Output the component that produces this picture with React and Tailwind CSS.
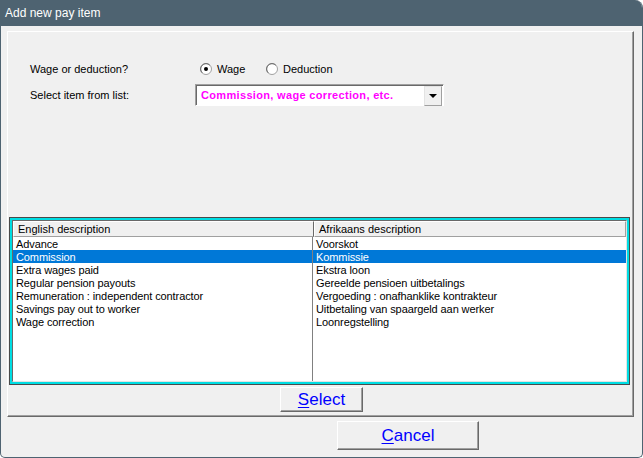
import React from 'react';

const rows = [
  ['Advance', 'Voorskot'],
  ['Commission', 'Kommissie'],
  ['Extra wages paid', 'Ekstra loon'],
  ['Regular pension payouts', 'Gereelde pensioen uitbetalings'],
  ['Remuneration : independent contractor', 'Vergoeding : onafhanklike kontrakteur'],
  ['Savings pay out to worker', 'Uitbetaling van spaargeld aan werker'],
  ['Wage correction', 'Loonregstelling'],
];

const SELECTED = 1;

// classic win32 radio button
const Radio = ({ checked }) => (
  <svg width="12" height="12" viewBox="0 0 12 12" className="shrink-0">
    <circle cx="6" cy="6" r="5.5" fill="#ffffff" stroke="#a0a0a0" />
    <path d="M2.2 9.8 A5.3 5.3 0 0 1 9.8 2.2" fill="none" stroke="#696969" strokeWidth="1" />
    {checked && <circle cx="6" cy="6" r="2" fill="#000000" />}
  </svg>
);

const Column = ({ index }) => (
  <div className="flex flex-col">
    {rows.map((r, i) => (
      <div
        key={r[index]}
        className={`h-[13px] pt-[1px] leading-[12px] pl-[3px] whitespace-nowrap tracking-[-0.1px] ${
          i === SELECTED ? 'bg-[#0078d7] text-white' : 'text-black'
        }`}
      >
        {r[index]}
      </div>
    ))}
  </div>
);

const App = () => {
  return (
    <div className="w-[643px] h-[458px] bg-white font-['Liberation_Sans',Arial,sans-serif]">
      <div className="w-[643px] h-[458px] flex flex-col bg-[#f0f0f0] border-l border-r border-b border-[#4e6371] rounded-tr-[8px] rounded-b-[5px] overflow-hidden">
        {/* title bar */}
        <div className="h-[26px] shrink-0 bg-[#4e6371] flex items-center pl-[4px] text-white text-[12px]">
          Add new pay item
        </div>

        {/* group box */}
        <div className="ml-[6px] mt-[5px] w-[627px] h-[386px] shrink-0 flex flex-col border-t border-l border-t-white border-l-white border-r border-b border-r-[#696969] border-b-[#696969] shadow-[inset_-1px_-1px_0_#a0a0a0] text-[11px] text-black">
          <div className="mt-[30px] h-[14px] flex items-center">
            <div className="w-[170px] ml-[22px]">Wage or deduction?</div>
            <div className="w-[66px] flex items-center gap-[5px]">
              <Radio checked />
              <span>Wage</span>
            </div>
            <div className="flex items-center gap-[5px]">
              <Radio />
              <span>Deduction</span>
            </div>
          </div>

          <div className="mt-[8px] h-[22px] flex items-center">
            <div className="w-[165px] ml-[22px]">Select item from list:</div>
            <div className="w-[249px] h-[22px] flex bg-white border-t border-l border-t-[#a0a0a0] border-l-[#a0a0a0] border-r border-b border-r-white border-b-white shadow-[inset_1px_1px_0_#696969]">
              <div className="flex-1 flex items-center pl-[5px] font-bold tracking-[0.33px] text-[#ff00ff]">
                Commission, wage correction, etc.
              </div>
              <div className="w-[18px] h-[20px] mt-[1px] mr-[1px] flex items-center justify-center bg-[#f0f0f0] border-t border-l border-t-[#e3e3e3] border-l-[#e3e3e3] border-r border-b border-r-[#a0a0a0] border-b-[#a0a0a0]">
                <svg width="8" height="4" viewBox="0 0 8 4">
                  <path d="M0 0 H8 L4 4 Z" fill="#000000" />
                </svg>
              </div>
            </div>
          </div>

          {/* list view */}
          <div className="mt-[111px] ml-[1px] w-[621px] h-[168px] shrink-0 border border-[#4a4a4a] bg-[#00dde3] p-[2px]">
            <div className="w-full h-full flex flex-col bg-white border-t border-l border-t-[#696969] border-l-[#696969] border-r border-b border-r-[#e3e3e3] border-b-[#e3e3e3]">
              <div className="h-[16px] shrink-0 flex bg-[#f0f0f0]">
                <div className="w-[301px] h-[16px] leading-[15px] pl-[4px] border-t border-l border-t-white border-l-white border-r border-b border-r-[#696969] border-b-[#a0a0a0]">
                  English description
                </div>
                <div className="flex-1 h-[16px] leading-[15px] pl-[4px] border-t border-l border-t-white border-l-white border-r border-b border-r-[#a0a0a0] border-b-[#a0a0a0]">
                  Afrikaans description
                </div>
              </div>
              <div className="flex-1 flex">
                <div className="w-[300px] border-r border-r-[#808080]">
                  <Column index={0} />
                </div>
                <div className="flex-1">
                  <Column index={1} />
                </div>
              </div>
            </div>
          </div>

          <button className="mt-[2px] ml-[272px] w-[83px] h-[25px] flex items-center justify-center bg-[#f0f0f0] border-t border-l border-t-white border-l-white border-r border-b border-r-[#696969] border-b-[#696969] shadow-[inset_-1px_-1px_0_#a0a0a0] text-[17px] text-[#0000ff]">
            <span>
              <span className="underline underline-offset-2">S</span>elect
            </span>
          </button>
        </div>

        <button className="mt-[4px] ml-[336px] w-[142px] h-[29px] flex items-center justify-center bg-[#f0f0f0] border-t border-l border-t-white border-l-white border-r border-b border-r-[#696969] border-b-[#696969] shadow-[inset_-1px_-1px_0_#a0a0a0] text-[17px] text-[#0000ff]">
          <span>
            <span className="underline underline-offset-2">C</span>ancel
          </span>
        </button>
      </div>
    </div>
  );
};

export default App;
